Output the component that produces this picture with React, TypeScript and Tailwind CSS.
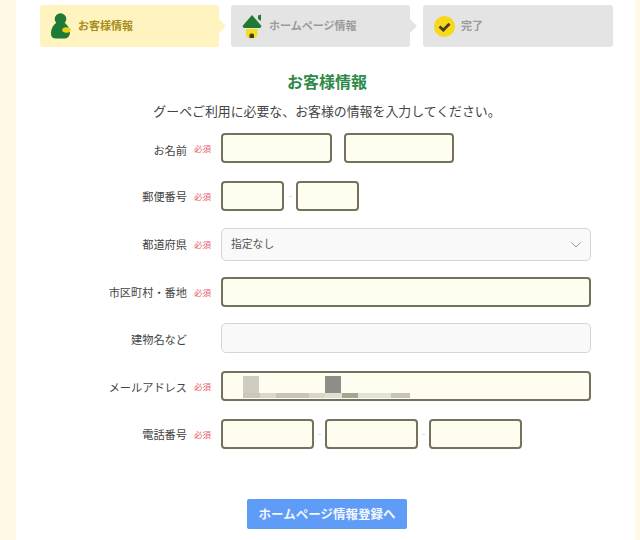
const font = { fontFamily: '"Noto Sans CJK JP", "Liberation Sans", sans-serif' };

const yellowInput = 'h-[30px] rounded-[4px] border-2 border-[#74715c] bg-[#fffdf0]';
const grayInput = 'rounded-[5px] border border-[#d5d5d5] bg-[#f9f9f9]';

function PersonIcon() {
  return (
    <svg width="20" height="26" viewBox="0 0 20 26" className="shrink-0">
      <circle cx="9.500" cy="6" r="5.800" fill="#1f7a36" />
      <path d="M5 10 C1 13 0 17 0 21 C0 24 2 25.500 5 25.500 L13 25.500 C17 25.500 19 23 19 19 C19 15 16 12 14 10 Z" fill="#1f7a36" />
      <ellipse cx="15.500" cy="17" rx="4.300" ry="2.800" fill="#e8d21c" />
    </svg>
  );
}

function HouseIcon() {
  return (
    <svg width="20" height="25" viewBox="0 0 20 25" className="shrink-0">
      <path d="M16 1.500 L19 0.500 V7 L16 5 Z" fill="#1f7a36" />
      <path d="M10 1 L19.500 12 Q19.500 14 17 14 H3 Q0.500 14 0.500 12 Z" fill="#1f7a36" />
      <path d="M4 15 H15.500 V21 C14.500 23 13 24.500 9.800 24.500 C6.500 24.500 5 23 4 21 Z" fill="#f3de1c" />
      <path d="M7.500 24 V21 C7.500 19 12 19 12 21 V24 Z" fill="#4b3a22" />
    </svg>
  );
}

function CheckIcon() {
  return (
    <svg width="21" height="21" viewBox="0 0 21 21" className="shrink-0">
      <circle cx="10.500" cy="10.500" r="10.500" fill="#f6d91a" />
      <path d="M5.500 10.500 L9.300 14 L15.500 7.800" fill="none" stroke="#4a3c20" strokeWidth="2.800" />
    </svg>
  );
}

function Step({ icon, label, active, arrow, className }: { icon: React.ReactNode; label: string; active?: boolean; arrow?: boolean; className: string }) {
  return (
    <div className={`relative flex h-[42px] items-center rounded-[3px] ${active ? 'bg-[#fff3c0]' : 'bg-[#e4e4e4]'} ${className}`}>
      {icon}
      <span className={`pb-[2px] text-[11px] font-bold ${active ? 'text-[#a68f1c]' : 'text-[#9b9b9b]'}`}>{label}</span>
      {arrow && (
        <span className={`absolute right-[-7px] top-[14px] h-0 w-0 border-y-[7px] border-l-[7px] border-y-transparent ${active ? 'border-l-[#fff3c0]' : 'border-l-[#e4e4e4]'}`} />
      )}
    </div>
  );
}

function Row({ label, required = true, labelClass = '', className, children }: { label: string; required?: boolean; labelClass?: string; className: string; children: React.ReactNode }) {
  return (
    <div className={`flex items-center ${className}`}>
      <div className={`w-[147px] text-right text-[11.200px] text-[#444] ${labelClass}`}>{label}</div>
      <div className="w-[34px] pl-[7px] text-[8.500px] text-[#ea5a64]">{required ? '必須' : ''}</div>
      {children}
    </div>
  );
}

function Dash({ className }: { className: string }) {
  return (
    <div className={`flex justify-center ${className}`}>
      <div className="h-px w-[3px] bg-[#dcdcdc]" />
    </div>
  );
}

export default function App() {
  return (
    <div className="flex h-[540px] w-[640px] overflow-hidden bg-white" style={font}>
      <div className="w-4 bg-[#fff9e5]" />
      <main className="w-[619px] pl-6 pt-[5px]">
        <div className="flex">
          <Step active arrow className="w-[179px] gap-[7px] pl-[11px]" icon={<PersonIcon />} label="お客様情報" />
          <Step arrow className="ml-3 w-[179px] gap-[7px] pl-[11px]" icon={<HouseIcon />} label="ホームページ情報" />
          <Step className="ml-[13px] w-[190px] gap-[6px] pl-[11px]" icon={<CheckIcon />} label="完了" />
        </div>

        <h1 className="mt-[23px] w-[574px] text-center text-[16px] leading-[22px] font-bold text-[#2e8a48]">お客様情報</h1>
        <p className="mt-[10px] w-[574px] text-center text-[12.900px] leading-[18px] text-[#444]">グーペご利用に必要な、お客様の情報を入力してください。</p>

        <Row label="お名前" labelClass="pt-1" className="mt-[13px]">
          <div className={`w-[111px] ${yellowInput}`} />
          <div className={`ml-3 w-[110px] ${yellowInput}`} />
        </Row>
        <Row label="郵便番号" className="mt-[18px]">
          <div className={`w-[63px] ${yellowInput}`} />
          <Dash className="w-3" />
          <div className={`w-[63px] ${yellowInput}`} />
        </Row>
        <Row label="都道府県" className="mt-[17px]">
          <div className={`flex h-[33px] w-[370px] items-center justify-between pl-[9px] pr-[9px] text-[10.800px] text-[#555] ${grayInput}`}>
            <span className="pb-[2px]">指定なし</span>
            <svg width="10" height="6" viewBox="0 0 10 6" fill="none" stroke="#999" strokeWidth="1">
              <path d="M0.500 0.500 L5 5 L9.500 0.500" />
            </svg>
          </div>
        </Row>
        <Row label="市区町村・番地" className="mt-[16px]">
          <div className={`w-[370px] ${yellowInput}`} />
        </Row>
        <Row label="建物名など" required={false} labelClass="pt-[2px]" className="mt-[16px]">
          <div className={`h-[30px] w-[370px] ${grayInput}`} />
        </Row>
        <Row label="メールアドレス" labelClass="pt-[2px]" className="mt-[18px]">
          <div className={`relative w-[370px] ${yellowInput}`}>
            <div className="absolute left-[20px] top-[3px] h-[17px] w-4 bg-[#cfcdc2]" />
            <div className="absolute left-[102px] top-[3px] h-[17px] w-4 bg-[#8f8d88]" />
            <div className="absolute left-[20px] top-[20px] flex h-[5px]">
              <div className="w-[17px] bg-[#c9c8ba]" />
              <div className="w-[16px] bg-[#dad9cc]" />
              <div className="w-[33px] bg-[#c6c5b8]" />
              <div className="w-[16px] bg-[#d8d7ca]" />
              <div className="w-[17px] bg-[#dfdfd4]" />
              <div className="w-[16px] bg-[#a5a497]" />
              <div className="w-[33px] bg-[#e2e2d7]" />
              <div className="w-[19px] bg-[#c6c5b8]" />
            </div>
          </div>
        </Row>
        <Row label="電話番号" className="mt-[18px]">
          <div className={`w-[93px] ${yellowInput}`} />
          <Dash className="w-[11px]" />
          <div className={`w-[93px] ${yellowInput}`} />
          <Dash className="w-[11px]" />
          <div className={`w-[93px] ${yellowInput}`} />
        </Row>

        <button className="ml-[207px] mt-[50px] h-[30px] w-[160px] rounded-[2px] bg-[#5f9cf8] text-[12.500px] font-bold text-[#f2f6fd]">
          ホームページ情報登録へ
        </button>
      </main>
      <div className="flex-1 bg-[#fff9e5]" />
    </div>
  );
}
